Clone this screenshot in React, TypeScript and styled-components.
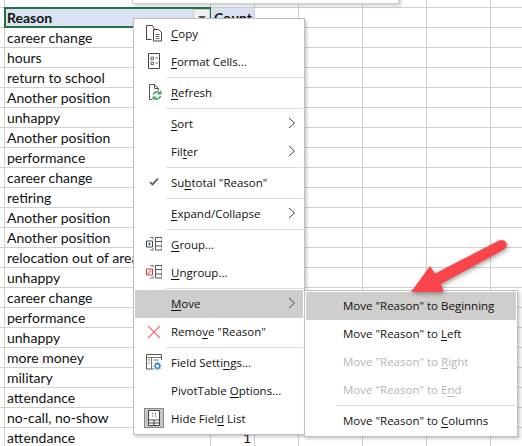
import React from "react";
import styled, { createGlobalStyle } from "styled-components";

const Global = createGlobalStyle`
  html, body { margin: 0; padding: 0; background: #fff; overflow: hidden; }
  #root { width: 522px; height: 446px; }
`;

const Sheet = styled.div`
  position: relative;
  width: 522px;
  height: 446px;
  overflow: hidden;
  background-color: #fff;
  background-image: linear-gradient(#d0d0d0 1px, transparent 1px);
  background-size: 100% 20px;
  background-position: 0 7px;
`;

const Grid = styled.div`
  display: grid;
  grid-template-columns: 5px 206px 44px 44px 64px 64px 64px 31px;
  height: 446px;
`;

const Col = styled.div`
  border-right: 1px solid #d0d0d0;
  box-sizing: border-box;
  display: flex;
  flex-direction: column;
  padding-top: 8px;
  min-width: 0;
`;

const Cell = styled.div<{ $head?: boolean; $right?: boolean; $inset: number }>`
  height: 20px;
  flex: none;
  box-sizing: border-box;
  padding: 0 3px 0 ${(p) => p.$inset}px;
  font: ${(p) => (p.$head ? 700 : 400)} 14px/19px Lato, sans-serif;
  color: #111;
  white-space: nowrap;
  overflow: hidden;
  text-align: ${(p) => (p.$right ? "right" : "left")};
  background: ${(p) => (p.$head ? "#d9e1f2" : "transparent")};
`;

const Selection = styled.div`
  position: absolute;
  left: 4px;
  top: 7px;
  width: 207px;
  height: 21px;
  box-sizing: border-box;
  border: 2px solid #217346;
`;

const FilterButton = styled.div`
  position: absolute;
  left: 193px;
  top: 9px;
  width: 17px;
  height: 17px;
  box-sizing: border-box;
  background: #eef0f4;
  border: 1px solid #c4c8d0;
  &::after {
    content: "";
    position: absolute;
    left: 4px;
    top: 6px;
    border: 4px solid transparent;
    border-top: 4px solid #555;
    border-bottom: 0;
  }
`;

const BackPane = styled.div`
  position: absolute;
  left: 132px;
  top: -10px;
  width: 265px;
  height: 12px;
  background: #fff;
  border: 1px solid #cfcfcf;
  box-shadow: 2px 2px 3px rgba(0, 0, 0, 0.18);
`;

const Menu = styled.div<{ $left: number; $top: number; $width: number }>`
  position: absolute;
  left: ${(p) => p.$left}px;
  top: ${(p) => p.$top}px;
  width: ${(p) => p.$width}px;
  box-sizing: border-box;
  padding: 1px;
  background: #fff;
  border: 1px solid #bdbdbd;
  box-shadow: 2px 2px 3px rgba(0, 0, 0, 0.2);
  display: flex;
  flex-direction: column;
  font: 400 11.5px/28px "Open Sans", sans-serif;
  color: #111;
`;

const Row = styled.div<{ $active?: boolean; $disabled?: boolean; $indent: number }>`
  position: relative;
  height: 28px;
  flex: none;
  display: flex;
  align-items: center;
  padding-left: ${(p) => p.$indent}px;
  white-space: nowrap;
  background: ${(p) => (p.$active ? "#d0cecd" : "transparent")};
  color: ${(p) => (p.$disabled ? "#b5b5b5" : "#111")};
`;

const IconSlot = styled.span`
  position: absolute;
  left: 7px;
  top: 2px;
  width: 24px;
  height: 24px;
  display: flex;
  align-items: center;
  justify-content: center;
`;

const Chevron = styled.svg`
  position: absolute;
  right: 6px;
  top: 7px;
`;

const Separator = styled.div<{ $indent: number }>`
  height: 3px;
  flex: none;
  margin-left: ${(p) => p.$indent}px;
  box-sizing: border-box;
  padding-top: 1px;
  &::before {
    content: "";
    display: block;
    height: 1px;
    background: #dcdcdc;
  }
`;

const Key = styled.span`
  text-decoration: underline;
  text-underline-offset: 2px;
  text-decoration-thickness: 1px;
`;

const ArrowLayer = styled.svg`
  position: absolute;
  left: 0;
  top: 0;
  filter: drop-shadow(1px 2px 2px rgba(0, 0, 0, 0.35));
`;

const reasons = [
  "career change", "hours", "return to school", "Another position", "unhappy",
  "Another position", "performance", "career change", "retiring", "Another position",
  "Another position", "relocation out of area", "unhappy", "career change", "performance",
  "unhappy", "more money", "military", "attendance", "no-call, no-show", "attendance",
];

const Arrow = () => (
  <Chevron width="10" height="12" viewBox="0 0 10 12">
    <path d="M2 1l5.5 5L2 11" fill="none" stroke="#444" strokeWidth="1" />
  </Chevron>
);

const IconCopy = () => (
  <svg width="16" height="18" viewBox="0 0 16 18" fill="none" stroke="#444">
    <path d="M5.5 14.5h-5V.5h6l2 3.5" />
    <path d="M7.5 4.5h5l3 3v8.5h-8z" fill="#fff" />
    <path d="M9.5 9.5h4M9.5 11.5h4M9.5 13.5h4" stroke="#666" />
  </svg>
);
const IconFormat = () => (
  <svg width="16" height="18" viewBox="0 0 16 18" fill="none" stroke="#444">
    <path d="M2.5.5h11v15h-11z" />
    <path d="M5 4h2.500v2.500H5zM5 9h2.500v2.500H5zM9.500 5h2.500M9.500 10h2.500" stroke="#666" />
  </svg>
);
const IconRefresh = () => (
  <svg width="16" height="18" viewBox="0 0 16 18" fill="none">
    <path d="M6 15.500H3.500V.5h5l4 4v2" stroke="#555" />
    <path d="M8.500.5v4h4" stroke="#555" />
    <path d="M7.500 10.500a4 4 0 0 1 6.500-1.500M14.500 12a4 4 0 0 1-6.500 2" stroke="#2e9e4a" strokeWidth="1.4" />
    <path d="M14.800 6.500v3.300h-3.300M7.200 16v-3h3.200" stroke="#2e9e4a" strokeWidth="1.2" />
  </svg>
);
const IconCheck = () => (
  <svg width="12" height="14" viewBox="0 0 12 14" fill="none" stroke="#555" strokeWidth="1.7">
    <path d="M2 6l2.500 2.500L10 2.500" />
  </svg>
);
const ColumnsGlyph = () => (
  <>
    <path d="M9.500 1.500h6.500v12.500H9.500zM9.500 5.500h6.500M9.500 10h6.500" stroke="#555" />
    <path d="M4 1.500h3.500M4 14h3.500M7 1.500v2M7 12v2" stroke="#777" />
  </>
);
const IconGroup = () => (
  <svg width="16" height="18" viewBox="0 0 16 18" fill="none">
    <ColumnsGlyph />
    <path d="M.5 5h6v6h-6z" stroke="#444" fill="#fff" />
    <path d="M2 8h3M3.500 6.500v3" stroke="#1f7fc4" />
  </svg>
);
const IconUngroup = () => (
  <svg width="16" height="18" viewBox="0 0 16 18" fill="none">
    <ColumnsGlyph />
    <path d="M.5 5h6v6h-6z" stroke="#e8303a" fill="#fff" />
    <path d="M2 10l3-4" stroke="#e8303a" />
  </svg>
);
const IconRemove = () => (
  <svg width="16" height="16" viewBox="0 0 16 16" fill="none" stroke="#f0707a" strokeWidth="1.1">
    <path d="M2 2l12 12M14 2L2 14" />
  </svg>
);
const IconField = () => (
  <svg width="16" height="18" viewBox="0 0 16 18" fill="none">
    <path d="M15.500 6V.5H.5v14.500h7" stroke="#555" />
    <path d="M.5 3.500h15M5.500 3.500V15M2 6h2M2 9h2M7.500 6h5" stroke="#777" />
    <circle cx="11.500" cy="12" r="2.300" stroke="#2f8fd8" strokeWidth="1.400" fill="#fff" />
    <path d="M11.500 8v1.500M11.500 14.500V16M7.500 12H9M14 12h1.500M8.700 9.200l1 1M13.300 13.800l1 1M14.300 9.200l-1 1M9.700 13.800l-1 1" stroke="#2f8fd8" strokeWidth="1.200" />
  </svg>
);
const HideBox = styled.span`
  display: flex;
  width: 20px;
  height: 20px;
  margin-bottom: 2px;
  box-sizing: border-box;
  align-items: center;
  justify-content: center;
  background: #c6c6c6;
  border: 1px solid #8a8a8a;
`;
const IconHide = () => (
  <HideBox>
    <svg width="12" height="16" viewBox="0 0 12 16" fill="#fff" stroke="#444">
      <path d="M.5.5h11v15H.5z" />
      <path d="M.5 10h11M.5 13h11M6 10v5.500M4 3.500h1M7 3.500h1M4 6h1M7 6h1" fill="none" />
    </svg>
  </HideBox>
);

const MAIN = 36;
const SUB = 37;

export default function App() {
  return (
    <Sheet>
      <Global />
      <Grid>
        <Col />
        <Col>
          <Cell $head $inset={2}>Reason</Cell>
          {reasons.map((r, i) => (
            <Cell key={i} $inset={2}>{r}</Cell>
          ))}
        </Col>
        <Col>
          <Cell $head $inset={3}>Count</Cell>
          {reasons.map((_, i) => (
            <Cell key={i} $right $inset={3}>{i === 20 ? "1" : ""}</Cell>
          ))}
        </Col>
        <Col />
        <Col />
        <Col />
        <Col />
      </Grid>
      <Selection />
      <FilterButton />
      <BackPane />

      <Menu $left={133} $top={18} $width={172}>
        <Row $indent={MAIN}><IconSlot><IconCopy /></IconSlot><span><Key>C</Key>opy</span></Row>
        <Row $indent={MAIN}><IconSlot><IconFormat /></IconSlot><span><Key>F</Key>ormat Cells...</span></Row>
        <Separator $indent={31} />
        <Row $indent={MAIN}><IconSlot><IconRefresh /></IconSlot><span><Key>R</Key>efresh</span></Row>
        <Separator $indent={31} />
        <Row $indent={MAIN}><span><Key>S</Key>ort</span><Arrow /></Row>
        <Row $indent={MAIN}><span>Fil<Key>t</Key>er</span><Arrow /></Row>
        <Separator $indent={31} />
        <Row $indent={MAIN}><IconSlot><IconCheck /></IconSlot><span>Su<Key>b</Key>total "Reason"</span></Row>
        <Separator $indent={31} />
        <Row $indent={MAIN}><span><Key>E</Key>xpand/Collapse</span><Arrow /></Row>
        <Separator $indent={31} />
        <Row $indent={MAIN}><IconSlot><IconGroup /></IconSlot><span><Key>G</Key>roup...</span></Row>
        <Row $indent={MAIN}><IconSlot><IconUngroup /></IconSlot><span><Key>U</Key>ngroup...</span></Row>
        <Separator $indent={31} />
        <Row $indent={MAIN} $active><span><Key>M</Key>ove</span><Arrow /></Row>
        <Row $indent={MAIN}><IconSlot><IconRemove /></IconSlot><span>Remo<Key>v</Key>e "Reason"</span></Row>
        <Separator $indent={31} />
        <Row $indent={MAIN}><IconSlot><IconField /></IconSlot><span>Field Setti<Key>n</Key>gs...</span></Row>
        <Row $indent={MAIN}><span>PivotTable <Key>O</Key>ptions...</span></Row>
        <Row $indent={MAIN}><IconSlot><IconHide /></IconSlot><span>Hide Fiel<Key>d</Key> List</span></Row>
      </Menu>

      <Menu $left={304} $top={290} $width={214}>
        <Row $indent={SUB} $active><span>Move "Reason" to Be<Key>g</Key>inning</span></Row>
        <Row $indent={SUB}><span>Move "Reason" to <Key>L</Key>eft</span></Row>
        <Row $indent={SUB} $disabled><span>Move "Reason" to <Key>R</Key>ight</span></Row>
        <Row $indent={SUB} $disabled><span>Move "Reason" to E<Key>n</Key>d</span></Row>
        <Separator $indent={31} />
        <Row $indent={SUB}><span>Move "Reason" to <Key>C</Key>olumns</span></Row>
      </Menu>

      <ArrowLayer width="522" height="446" viewBox="0 0 522 446">
        <path
          d="M411 292L430 266L435 273.500L499 240.500Q504 238.500 506.500 243Q507.500 247 504 249.500L441 284L443.500 292z"
          fill="#f9444c"
        />
      </ArrowLayer>
    </Sheet>
  );
}
